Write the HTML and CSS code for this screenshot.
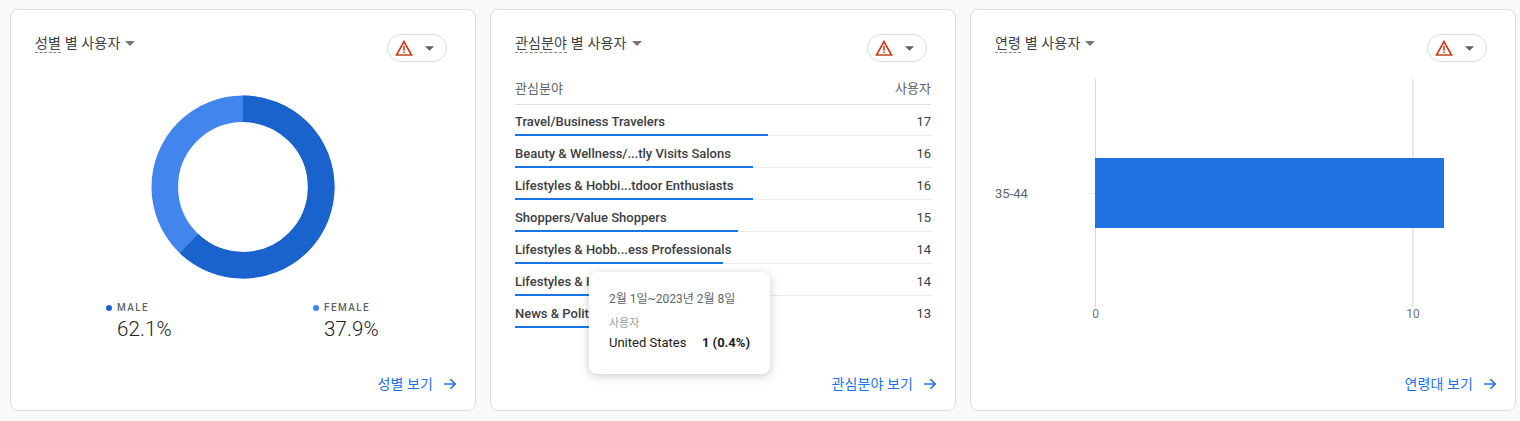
FILE: index.html
```html
<!DOCTYPE html>
<html lang="ko">
<head>
<meta charset="utf-8">
<title>사용자</title>
<link rel="stylesheet" href="styles.css">
</head>
<body>
<main class="cards">
  <section class="card card-gender">
    <header class="card-head">
      <h2 class="title"><span class="dim">성별</span> 별 사용자<svg class="caret" viewBox="0 0 10 5"><path d="M0 0h10L5 5z"/></svg></h2>
      <div class="pill">
        <svg class="warn" viewBox="0 0 18 16"><path d="M9 1.6 16.5 15h-15z" fill="none" stroke="#c5411e" stroke-width="1.7"/><path d="M8.2 6h1.6v4.6H8.2zM8.2 11.5h1.6v1.6H8.2z" fill="#c5411e"/></svg>
        <svg class="caret-sm" viewBox="0 0 10 5"><path d="M0 0h10L5 5z"/></svg>
      </div>
    </header>
    <div class="donut-wrap">
      <svg class="donut" viewBox="0 0 184 184">
        <circle cx="92" cy="92" r="78.2" fill="none" stroke="#4285ec" stroke-width="26.6"/>
        <circle cx="92" cy="92" r="78.2" fill="none" stroke="#1a63cc" stroke-width="26.6" pathLength="100" stroke-dasharray="62.1 37.9" transform="rotate(-90 92 92)"/>
      </svg>
    </div>
    <div class="legend">
      <div class="legend-item">
        <div class="legend-label"><span class="dot dot-male"></span>MALE</div>
        <div class="legend-value">62.1%</div>
      </div>
      <div class="legend-item">
        <div class="legend-label"><span class="dot dot-female"></span>FEMALE</div>
        <div class="legend-value">37.9%</div>
      </div>
    </div>
    <a class="more">성별 보기<svg class="arrow" viewBox="0 0 14 12"><path d="M1 6h11M7.4 1.2 12.2 6l-4.8 4.8" fill="none" stroke="#1a73e8" stroke-width="1.6"/></svg></a>
  </section>

  <section class="card card-interest">
    <header class="card-head">
      <h2 class="title"><span class="dim">관심분야</span> 별 사용자<svg class="caret" viewBox="0 0 10 5"><path d="M0 0h10L5 5z"/></svg></h2>
      <div class="pill">
        <svg class="warn" viewBox="0 0 18 16"><path d="M9 1.6 16.5 15h-15z" fill="none" stroke="#c5411e" stroke-width="1.7"/><path d="M8.2 6h1.6v4.6H8.2zM8.2 11.5h1.6v1.6H8.2z" fill="#c5411e"/></svg>
        <svg class="caret-sm" viewBox="0 0 10 5"><path d="M0 0h10L5 5z"/></svg>
      </div>
    </header>
    <div class="table">
      <div class="table-head"><span>관심분야</span><span>사용자</span></div>
      <div class="row"><span class="name">Travel/Business Travelers</span><span class="num">17</span><i class="bar" style="width:253px"></i></div>
      <div class="row"><span class="name">Beauty &amp; Wellness/...tly Visits Salons</span><span class="num">16</span><i class="bar" style="width:238px"></i></div>
      <div class="row"><span class="name">Lifestyles &amp; Hobbi...tdoor Enthusiasts</span><span class="num">16</span><i class="bar" style="width:238px"></i></div>
      <div class="row"><span class="name">Shoppers/Value Shoppers</span><span class="num">15</span><i class="bar" style="width:223px"></i></div>
      <div class="row"><span class="name">Lifestyles &amp; Hobb...ess Professionals</span><span class="num">14</span><i class="bar" style="width:208px"></i></div>
      <div class="row"><span class="name">Lifestyles &amp; H</span><span class="num">14</span><i class="bar" style="width:208px"></i></div>
      <div class="row row-last"><span class="name">News &amp; Polit</span><span class="num">13</span><i class="bar" style="width:193px"></i></div>
    </div>
    <a class="more">관심분야 보기<svg class="arrow" viewBox="0 0 14 12"><path d="M1 6h11M7.4 1.2 12.2 6l-4.8 4.8" fill="none" stroke="#1a73e8" stroke-width="1.6"/></svg></a>
    <div class="tooltip">
      <div class="tip-date">2월 1일~2023년 2월 8일</div>
      <div class="tip-label">사용자</div>
      <div class="tip-row"><span>United States</span><b>1 (0.4%)</b></div>
    </div>
  </section>

  <section class="card card-age">
    <header class="card-head">
      <h2 class="title"><span class="dim">연령</span> 별 사용자<svg class="caret" viewBox="0 0 10 5"><path d="M0 0h10L5 5z"/></svg></h2>
      <div class="pill">
        <svg class="warn" viewBox="0 0 18 16"><path d="M9 1.6 16.5 15h-15z" fill="none" stroke="#c5411e" stroke-width="1.7"/><path d="M8.2 6h1.6v4.6H8.2zM8.2 11.5h1.6v1.6H8.2z" fill="#c5411e"/></svg>
        <svg class="caret-sm" viewBox="0 0 10 5"><path d="M0 0h10L5 5z"/></svg>
      </div>
    </header>
    <svg class="chart" viewBox="0 0 546 260" width="546" height="260">
      <line x1="124.5" y1="0" x2="124.5" y2="228" stroke="#d5d5d5"/>
      <line x1="442" y1="0" x2="442" y2="228" stroke="#e8e8e8" stroke-width="2"/>
      <line x1="117" y1="114.5" x2="124" y2="114.5" stroke="#e8e8e8"/>
      <rect x="124" y="79" width="349" height="70" fill="#1f72e2"/>
      <text class="tick-y" x="24" y="119">35-44</text>
      <text class="tick-x" x="124.5" y="239">0</text>
      <text class="tick-x" x="442" y="239">10</text>
    </svg>
    <a class="more">연령대 보기<svg class="arrow" viewBox="0 0 14 12"><path d="M1 6h11M7.4 1.2 12.2 6l-4.8 4.8" fill="none" stroke="#1a73e8" stroke-width="1.6"/></svg></a>
  </section>
</main>
</body>
</html>
```
FILE: styles.css
```css
* { box-sizing: border-box; }
html, body { margin: 0; height: 100%; }
body {
  background: #f8f9fb;
  font-family: Roboto, "Noto Sans CJK KR", sans-serif;
  color: #3c4043;
  overflow: hidden;
}
.cards {
  display: flex;
  gap: 14px;
  padding: 9px 4px 0 10px;
}
.card {
  position: relative;
  height: 402px;
  background: #fff;
  border: 1px solid #dadce0;
  border-radius: 8px;
  padding: 22px 24px 0;
  flex: none;
}
.card-gender, .card-interest { width: 466px; }
.card-age { width: 546px; }
.card-head {
  display: flex;
  justify-content: space-between;
  align-items: flex-start;
  height: 40px;
}
.title {
  margin: 0;
  font-size: 14px;
  line-height: 20px;
  font-weight: 400;
  letter-spacing: .15px;
  color: #3c4043;
  display: flex;
  align-items: center;
  white-space: pre;
}
.dim { border-bottom: 1px dashed #80868b; line-height: 18px; margin-top: 2px; }
.caret { width: 10px; height: 5px; margin: 2px 0 0 5px; fill: #757575; }
.pill {
  width: 60px;
  height: 28px;
  margin: 2px 4px 0 0;
  border: 1px solid #dadce0;
  border-radius: 14px;
  display: flex;
  align-items: center;
  padding-left: 7px;
}
.warn { width: 18px; height: 16px; margin-top: -1px; }
.caret-sm { width: 9px; height: 5px; margin-left: 12px; fill: #616161; }

.donut-wrap { display: flex; justify-content: center; margin-top: 23px; }
.donut { width: 184px; height: 184px; }
.legend { display: flex; margin-top: 22px; padding-left: 71px; }
.legend-item { width: 207px; flex: none; }
.legend-label {
  display: flex;
  align-items: center;
  font-size: 10px;
  line-height: 14px;
  font-weight: 500;
  letter-spacing: 1.4px;
  color: #5f6368;
}
.dot { width: 6px; height: 6px; border-radius: 50%; margin-right: 5px; }
.dot-male { background: #1a63cc; }
.dot-female { background: #4285ec; }
.legend-value {
  margin-left: 11px;
  font-size: 20.5px;
  font-weight: 300;
  line-height: 28px;
  letter-spacing: .1px;
  color: #202124;
}
.more {
  position: absolute;
  right: 18px;
  bottom: 16px;
  display: flex;
  align-items: center;
  font-size: 14px;
  line-height: 20px;
  letter-spacing: .1px;
  color: #1a73e8;
}
.arrow { width: 14px; height: 12px; margin-left: 10px; }

.table { font-size: 13px; width: 416px; margin-top: 7px; }
.table-head {
  display: flex;
  justify-content: space-between;
  height: 26px;
  margin-bottom: -1px;
  line-height: 20px;
  color: #5f6368;
  border-bottom: 1px solid #dadce0;
}
.row {
  position: relative;
  display: flex;
  justify-content: space-between;
  align-items: center;
  height: 32px;
  padding-top: 3px;
  border-bottom: 1px solid #e8eaed;
  font-size: 13px;
}
.row-last { border-bottom-color: transparent; }
.name { font-weight: 500; font-size: 13px; color: #3c4043; white-space: nowrap; }
.num { color: #3c4043; }
.bar {
  position: absolute;
  left: 0;
  bottom: -1px;
  height: 2px;
  background: #1a73e8;
}
.tooltip {
  position: absolute;
  left: 98px;
  top: 262px;
  width: 181px;
  height: 102px;
  padding: 17px 20px;
  background: #fff;
  border-radius: 8px;
  box-shadow: 0 2px 10px rgba(60, 64, 67, .28);
  font-size: 12px;
}
.tip-date { color: #5f6368; line-height: 20px; }
.tip-label { color: #9aa0a6; font-size: 11px; line-height: 16px; margin-top: 7px; }
.tip-row {
  display: flex;
  justify-content: space-between;
  margin-top: 1px;
  font-size: 13px;
  line-height: 20px;
  color: #202124;
  white-space: nowrap;
}
.tip-row b { font-weight: 700; }

.chart { display: block; margin: 7px -24px 0; width: 546px; }
.tick-y { font-size: 13px; fill: #5f6368; font-family: Roboto, sans-serif; }
.tick-x { font-size: 12px; fill: #757575; text-anchor: middle; font-family: Roboto, sans-serif; }
```
